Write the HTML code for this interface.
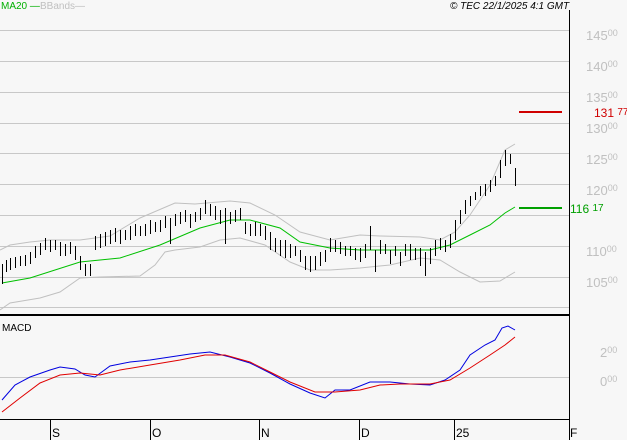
<!DOCTYPE html><html><head><style>body{margin:0;background:#f7f7f7}svg{display:block;font-family:"Liberation Sans",sans-serif}</style></head><body>
<svg width="627" height="440" viewBox="0 0 627 440">
<rect width="627" height="440" fill="#f7f7f7"/>
<g stroke="#c8c8c8" stroke-width="1">
<path d="M0 30.5H569M0 61.5H569M0 92.5H569M0 123.5H569M0 153.5H569M0 184.5H569M0 215.5H569M0 246.5H569M0 277.5H569M0 307.5H569M0 377.5H569"/>
</g>
<path d="M569.5 10V440" stroke="#000"/>
<path d="M0 315H569" stroke="#000" stroke-width="2"/>
<path d="M0 419.5H569M50.5 419V440M150.5 419V440M259.5 419V440M359.5 419V440M454.5 419V440M569.5 419V440" stroke="#000"/>
<g font-size="12" fill="#000"><text x="52" y="437">S</text><text x="152" y="437">O</text><text x="261" y="437">N</text><text x="361" y="437">D</text><text x="456" y="437">25</text><text x="570" y="437">F</text></g>
<text x="1" y="9" font-size="10" fill="#00b000">MA20 —</text>
<text x="40" y="9" font-size="10" fill="#c0c0c0">BBands—</text>
<text x="450" y="9" font-size="10" font-style="italic" fill="#000">© TEC 22/1/2025 4:1 GMT</text>
<text x="2" y="331" font-size="10" fill="#000">MACD</text>
<g font-size="13" fill="#c0c0c0">
<text x="586" y="40">145<tspan font-size="9" dy="-4">00</tspan></text>
<text x="586" y="71">140<tspan font-size="9" dy="-4">00</tspan></text>
<text x="586" y="102">135<tspan font-size="9" dy="-4">00</tspan></text>
<text x="586" y="133">130<tspan font-size="9" dy="-4">00</tspan></text>
<text x="586" y="164">125<tspan font-size="9" dy="-4">00</tspan></text>
<text x="586" y="195">120<tspan font-size="9" dy="-4">00</tspan></text>
<text x="586" y="256">110<tspan font-size="9" dy="-4">00</tspan></text>
<text x="586" y="287">105<tspan font-size="9" dy="-4">00</tspan></text>
<text x="600" y="357">2<tspan font-size="9" dy="-4">00</tspan></text>
<text x="600" y="386">0<tspan font-size="9" dy="-4">00</tspan></text>
</g>
<path d="M519 112H562" stroke="#d00000" stroke-width="2"/>
<text x="594" y="117" font-size="12" fill="#d00000">131 <tspan font-size="10" dy="-2">77</tspan></text>
<path d="M519 208H562" stroke="#00a000" stroke-width="2"/>
<text x="570" y="213" font-size="12" fill="#00a000">116 <tspan font-size="10" dy="-2">17</tspan></text>
<g fill="none" stroke="#c0c0c0" stroke-width="1">
<polyline points="0,250 10,245 30,242 50,240 80,240 110,236 140,218 175,203 195,204 230,201 250,203 275,215 300,232 330,240 360,235 380,236 420,237 440,240 455,232 470,215 490,185 505,150 515,144"/>
<polyline points="0,310 10,303 40,298 60,292 80,278 100,277 140,276 155,265 165,252 175,250 200,247 220,240 240,238 265,245 290,262 310,270 330,270 360,268 390,265 420,258 440,260 460,272 480,282 500,281 515,272"/>
</g>
<polyline fill="none" stroke="#00c000" stroke-width="1" points="2,283 30,278 80,262 120,258 160,245 200,228 230,220 250,220 280,228 300,242 330,248 360,250 400,250 430,250 450,245 470,235 490,225 505,213 515,207"/>
<path fill="none" stroke="#000" stroke-width="1" shape-rendering="crispEdges" d="M2.5 264V284M6.5 260V272M10.5 258V270M15.5 257V268M20.5 256V266M25.5 255V266M30.5 252V264M35.5 246V258M40.5 243V255M45.5 238V250M50.5 240V252M55.5 240V250M60.5 242V256M65.5 244V256M70.5 242V254M75.5 246V260M80.5 256V270M85.5 264V276M90.5 264V276M95.5 236V250M100.5 234V248M105.5 232V246M110.5 230V244M115.5 228V242M120.5 230V244M125.5 230V240M130.5 226V240M135.5 224V236M140.5 226V236M145.5 224V236M150.5 220V234M155.5 222V232M160.5 220V232M165.5 216V228M170.5 218V244M175.5 214V226M180.5 212V224M185.5 210V222M190.5 214V228M195.5 212V222M200.5 208V220M205.5 200V214M210.5 204V216M215.5 206V220M220.5 210V224M225.5 208V244M230.5 212V224M235.5 210V222M240.5 208V220M245.5 222V234M250.5 224V236M255.5 222V236M260.5 224V236M265.5 226V240M270.5 232V250M275.5 238V252M280.5 240V256M285.5 240V258M290.5 244V258M295.5 246V256M300.5 250V262M305.5 256V270M310.5 256V272M315.5 256V270M320.5 252V266M325.5 250V262M330.5 238V252M335.5 240V252M340.5 242V254M345.5 246V256M350.5 246V256M355.5 248V260M360.5 248V262M365.5 244V258M370.5 226V250M375.5 250V272M380.5 240V254M385.5 244V254M390.5 250V264M395.5 246V256M400.5 252V266M405.5 244V256M410.5 244V260M415.5 248V260M420.5 248V266M425.5 252V276M430.5 248V264M435.5 240V256M440.5 238V250M445.5 240V252M450.5 234V248M455.5 220V240M460.5 210V224M465.5 200V214M470.5 196V206M475.5 192V200M480.5 186V196M485.5 184V196M490.5 180V192M495.5 176V186M500.5 160V178M505.5 150V166M510.5 154V164M515.5 168V186"/>
<polyline fill="none" stroke="#0000e0" stroke-width="1" points="2,400 15,385 30,377 50,370 60,367 75,369 85,375 95,377 110,366 130,362 150,360 170,357 190,354 210,352 230,357 250,363 270,373 290,384 310,393 325,398 335,390 350,390 370,382 390,382 410,384 430,385 445,380 460,370 470,355 485,345 495,340 502,328 508,326 515,330"/>
<polyline fill="none" stroke="#e00000" stroke-width="1" points="2,412 20,398 40,383 60,375 80,373 100,375 120,370 150,365 180,360 205,355 225,355 250,362 270,372 290,382 315,392 335,392 360,390 380,385 400,384 430,384 450,380 470,368 490,355 505,345 515,337"/>
</svg></body></html>
